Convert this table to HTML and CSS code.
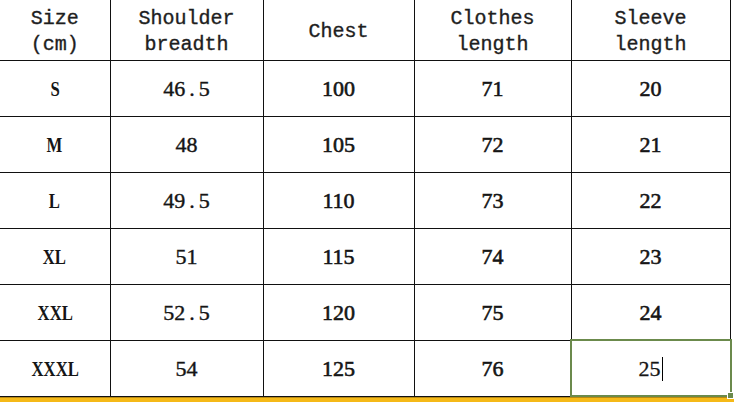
FILE: index.html
```html
<!DOCTYPE html>
<html>
<head>
<meta charset="utf-8">
<link rel="stylesheet" href="styles.css">
</head>
<body>
<div class="sheet">
<table class="chart">
  <colgroup>
    <col class="c1"><col class="c2"><col class="c3"><col class="c4"><col class="c5">
  </colgroup>
  <thead>
    <tr>
      <th>Size<br>(cm)</th>
      <th>Shoulder<br>breadth</th>
      <th>Chest</th>
      <th>Clothes<br>length</th>
      <th>Sleeve<br>length</th>
    </tr>
  </thead>
  <tbody>
    <tr><td><span class="sz">S</span></td><td class="mono">46<span class="dot">.</span>5</td><td>100</td><td>71</td><td>20</td></tr>
    <tr><td><span class="sz">M</span></td><td class="mono">48</td><td>105</td><td>72</td><td>21</td></tr>
    <tr><td><span class="sz">L</span></td><td class="mono">49<span class="dot">.</span>5</td><td>110</td><td>73</td><td>22</td></tr>
    <tr><td><span class="sz">XL</span></td><td class="mono">51</td><td>115</td><td>74</td><td>23</td></tr>
    <tr><td><span class="sz">XXL</span></td><td class="mono">52<span class="dot">.</span>5</td><td>120</td><td>75</td><td>24</td></tr>
    <tr><td><span class="sz">XXXL</span></td><td class="mono">54</td><td>125</td><td>76</td><td class="active"><span class="val">25<span class="caret"></span></span><span class="sel"><span class="handle"></span></span></td></tr>
  </tbody>
</table>
<div class="bar"></div>
</div>
</body>
</html>
```

FILE: styles.css
```css
html, body {
  margin: 0;
  padding: 0;
  background: #ffffff;
}
.sheet {
  width: 734px;
  height: 402px;
  overflow: hidden;
  display: flex;
  flex-direction: column;
}
.chart {
  border-collapse: collapse;
  table-layout: fixed;
  width: 730px;
  color: #151515;
  flex: none;
}
.c1 { width: 110px; }
.c2 { width: 153px; }
.c3 { width: 151px; }
.c4 { width: 157px; }
.c5 { width: 159px; }
.chart th,
.chart td {
  border-right: 1px solid #111;
  border-bottom: 1px solid #111;
  padding: 0;
  text-align: center;
  vertical-align: middle;
}
.chart th {
  height: 60px;
  padding-top: 5px;
  box-sizing: border-box;
  font-family: "Liberation Mono", monospace;
  font-weight: normal;
  font-size: 20px;
  line-height: 26px;
  color: #1e1e1e;
  -webkit-text-stroke: 0.35px #1e1e1e;
}
.chart td {
  height: 53px;
  font-family: "Liberation Serif", serif;
  font-weight: normal;
  font-size: 22px;
  line-height: 24px;
  padding-top: 2px;
  -webkit-text-stroke: 0.6px #151515;
}
.chart td.mono {
  -webkit-text-stroke: 0.4px #151515;
}
.dot {
  margin: 0 4px;
}
.sz {
  display: inline-block;
  transform: scaleX(0.76);
  font-weight: bold;
  -webkit-text-stroke: 0;
}
.active {
  position: relative;
}
.val {
  -webkit-text-stroke: 0.3px #151515;
}
.caret {
  display: inline-block;
  width: 1px;
  height: 24px;
  background: #000;
  vertical-align: -5px;
  margin-left: 1px;
}
.sel {
  position: absolute;
  left: -2px;
  top: -2px;
  right: -2px;
  bottom: -1px;
  border: 2px solid #6b8a4c;
}
.handle {
  position: absolute;
  right: -4px;
  bottom: -4px;
  width: 5px;
  height: 5px;
  background: #6b8a4c;
  border: 1px solid #fff;
}
.bar {
  height: 6px;
  background: #f5b918;
  border-top: 1px solid #b98a10;
}
```
